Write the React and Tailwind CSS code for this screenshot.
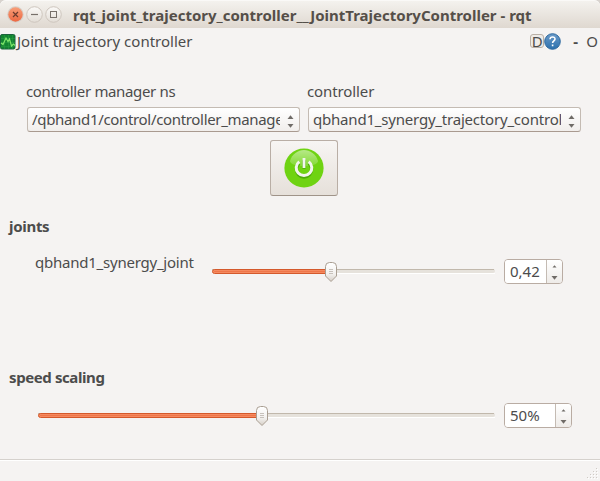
import React from "react";

const Arrow = ({ up, small }) => (
  <svg width="7" height="4" viewBox="0 0 7 4" className="block">
    <path
      d={up ? (small ? "M1.5 3.5 3.5 1.2 5.5 3.5Z" : "M.5 4 3.5.3 6.5 4Z") : "M.5 0 3.5 3.7 6.5 0Z"}
      fill="#6f6b67"
    />
  </svg>
);

const Combo = ({ children, spacing }) => (
  <div className="flex h-[25px] w-[273px] items-center rounded-[3px] border border-[#c4bbb3] border-b-[#a99a90] bg-gradient-to-b from-white to-[#f1eeec] pl-[4px]">
    <div className={`h-[22px] w-[248px] overflow-hidden whitespace-nowrap leading-[21px] ${spacing}`}>{children}</div>
    <div className="ml-[7px] mt-[4px] flex flex-col gap-[5px]">
      <Arrow up />
      <Arrow />
    </div>
  </div>
);

const Spin = ({ children, width, field }) => (
  <div className={`flex h-[25px] overflow-hidden rounded-[4px] border border-[#b9aca3] ${width}`}>
    <div className={`border-r border-[#c4bbb3] bg-white pl-[5px] leading-[23px] ${field}`}>{children}</div>
    <div className="flex flex-1 flex-col items-center gap-[8px] bg-gradient-to-b from-white to-[#eeebe8] pt-[4px]">
      <Arrow up small />
      <Arrow />
    </div>
  </div>
);

const Slider = ({ width, value, id }) => (
  <svg width={width} height="22" viewBox={`0 0 ${width} 22`} className="block shrink-0 overflow-visible">
    <defs>
      <linearGradient id={id} x1="0" x2="0" y1="0" y2="1">
        <stop offset="0" stopColor="#fff" />
        <stop offset=".6" stopColor="#f3f1ef" />
        <stop offset="1" stopColor="#d5cec6" />
      </linearGradient>
    </defs>
    <rect x="1" y="12" width={width - 1} height="1" fill="#fff" />
    <rect x="0" y="8" width={width} height="4" rx="2" fill="#e6e2dc" />
    <rect x="0" y="8" width={width - 1} height="1" fill="#c1b8ac" />
    <rect x=".5" y="8.5" width={value} height="4" rx="2" fill="#f58a60" stroke="#d4592c" />
    <rect x="2" y="10" width={value - 2} height="1" fill="#ef764a" />
    <path
      d={`M${value - 5.5} 5.5q0-4 4-4h3q4 0 4 4v9.5l-5.5 5.5-5.5-5.5Z`}
      fill={`url(#${id})`}
      stroke="#a99e92"
    />
    <path d={`M${value - 2} 8.5h4m-4 2h4m-4 2h4`} stroke="#c7c1bb" />
  </svg>
);

const GripDots = () => (
  <svg width="12" height="12" viewBox="0 0 12 12" className="block">
    {[[9, 0], [6, 3], [9, 3], [3, 6], [6, 6], [9, 6], [0, 9], [3, 9], [6, 9], [9, 9]].map(([x, y]) => (
      <g key={`${x}-${y}`}>
        <rect x={x + 1} y={y + 1} width="1" height="1" fill="#fff" />
        <rect x={x} y={y} width="1" height="1" fill="#cfcac5" />
      </g>
    ))}
  </svg>
);

const WindowButtons = () => (
  <svg width="58" height="20" viewBox="0 0 58 20" className="block shrink-0">
    <defs>
      <linearGradient id="close" x1="0" x2="0" y1="0" y2="1">
        <stop stopColor="#f89e78" />
        <stop offset="1" stopColor="#ec6842" />
      </linearGradient>
      <linearGradient id="plain" x1="0" x2="0" y1="0" y2="1">
        <stop stopColor="#fbfaf8" />
        <stop offset="1" stopColor="#e3ddd6" />
      </linearGradient>
    </defs>
    <circle cx="8.5" cy="9.5" r="8.3" fill="#d7d0c9" />
    <circle cx="8.5" cy="9.5" r="7.2" fill="url(#close)" />
    <path d="m6 7 5 5m0-5-5 5" stroke="#6c3b2d" strokeWidth="1.2" />
    <circle cx="27.5" cy="9.5" r="7.8" fill="url(#plain)" stroke="#cec6be" />
    <path d="M24 9.5h7" stroke="#77706a" strokeWidth="1.2" />
    <circle cx="46.5" cy="9.5" r="7.8" fill="url(#plain)" stroke="#cec6be" />
    <rect x="43.5" y="6.5" width="6" height="6" fill="none" stroke="#77706a" />
  </svg>
);

const PowerIcon = () => (
  <svg width="40" height="40" viewBox="0 0 40 40" className="block">
    <defs>
      <linearGradient id="gloss" x1="0" x2="0" y1="0" y2="1">
        <stop stopColor="#fff" stopOpacity=".5" />
        <stop offset="1" stopColor="#fff" stopOpacity=".15" />
      </linearGradient>
    </defs>
    <circle cx="20" cy="20" r="19.6" fill="#6fd312" />
    <path d="M6 13C8 6 14 2 20 2s12 4 14 11c0 3-6 5-14 5S6 16 6 13Z" fill="url(#gloss)" />
    <path d="M15.300 14.800a7.600 7.600 0 1 0 9.400 0M20 11.500v8.500" fill="none" stroke="#4eaa0a" strokeWidth="3.200" transform="translate(0 .8)" />
    <path d="M15.300 13.600a7.800 7.800 0 1 0 9.400 0" fill="none" stroke="#f2f5ee" strokeWidth="3" />
    <path d="M20 10v10" stroke="#f2f5ee" strokeWidth="2.800" />
  </svg>
);

export default function App() {
  return (
    <div className="h-[481px] w-[600px] overflow-hidden bg-[#d8d3ce] font-['Noto_Sans','Open_Sans',sans-serif] text-[15px] leading-[20px] text-[#4c4c4c]">
      <div className="flex h-full flex-col rounded-t-[6px] bg-[#f5f3f2]">
        <header className="flex h-[28px] shrink-0 items-center rounded-t-[6px] border-t border-[#faf9f7] bg-gradient-to-b from-[#f4f2ee] to-[#dfd8d0] pl-[7px]">
          <WindowButtons />
          <h1 className="ml-[8px] whitespace-nowrap font-bold text-[#554f49]">
            rqt_joint_trajectory_controller__JointTrajectoryController - rqt
          </h1>
        </header>

        <div className="flex h-[28px] shrink-0 items-start pr-[2px] pt-[3px]">
          <svg width="16" height="16" viewBox="0 0 16 16" className="mt-[3px] block shrink-0">
            <rect x=".5" y=".5" width="14.5" height="14.5" rx="1.5" fill="#138530" stroke="#1d633d" />
            <path d="M4.5 1v14M8.5 1v14M12.5 1v14M1 4.5h14M1 8.5h14M1 12.5h14" stroke="#32a34c" strokeWidth=".4" />
            <path d="m1 9 2 1.500 3-6.500 2 3.500 1.500-2.500 2 7 2-2 1.500 1.500" fill="none" stroke="#7ee66a" strokeWidth="1.2" />
          </svg>
          <span className="ml-px whitespace-nowrap">Joint trajectory controller</span>
          <div className="ml-auto flex items-start">
            <span className="mt-[3px] flex h-[14px] w-[14px] items-center justify-center rounded-[3px] border border-[#b9b0a6] bg-[#efebe7]">D</span>
            <svg width="17" height="17" viewBox="0 0 17 17" className="mt-[2px] block">
              <defs>
                <linearGradient id="help" x1="0" x2="0" y1="0" y2="1">
                  <stop stopColor="#6c9bc9" />
                  <stop offset="1" stopColor="#2b70ad" />
                </linearGradient>
              </defs>
              <circle cx="8.5" cy="8.5" r="7.8" fill="url(#help)" stroke="#2e699f" />
              <path d="M6 6.2q.2-2.2 2.6-2.2t2.4 2c0 1.8-2.4 1.8-2.4 4M8.6 11.5v1.7" fill="none" stroke="#fff" strokeWidth="1.6" />
            </svg>
            <span className="ml-[12px] w-[7px] font-bold">-</span>
            <span className="ml-[6px]">O</span>
          </div>
        </div>

        <main className="flex min-h-0 flex-1 flex-col">
          <section className="flex gap-[8px] pl-[27px] pt-[25px]">
            <div className="flex flex-col gap-[6px]">
              <label className="-ml-px tracking-[-0.35px]">controller manager ns</label>
              <Combo spacing="tracking-[-0.33px]">/qbhand1/control/controller_manager</Combo>
            </div>
            <div className="flex flex-col gap-[6px]">
              <label className="-ml-px tracking-[-0.1px]">controller</label>
              <Combo spacing="tracking-[-0.2px]">qbhand1_synergy_trajectory_controller</Combo>
            </div>
          </section>

          <button className="ml-[270px] mt-[8px] flex h-[56px] w-[68px] shrink-0 items-center justify-center rounded-[3px] border border-[#b9aea5] border-b-[#9f9389] bg-gradient-to-b from-[#f7f5f3] to-[#e6e0da]">
            <PowerIcon />
          </button>

          <section className="mt-[20px] h-[151px] shrink-0">
            <h2 className="ml-[9px] font-bold tracking-[-0.3px]">joints</h2>
            <div className="mt-[16px] flex items-start pl-[35px]">
              <label className="w-[177px] whitespace-nowrap tracking-[-0.23px]">qbhand1_synergy_joint</label>
              <div className="mt-[9px]">
                <Slider id="joint" width={283} value={119} />
              </div>
              <div className="ml-[9px] mt-[7px]">
                <Spin width="w-[59px]" field="w-[42px]">0,42</Spin>
              </div>
            </div>
          </section>

          <section className="shrink-0">
            <h2 className="ml-[9px] font-bold tracking-[-0.4px]">speed scaling</h2>
            <div className="mt-[16px] flex items-start pl-[38px]">
              <div className="mt-[2px]">
                <Slider id="speed" width={457} value={224} />
              </div>
              <div className="ml-[9px]">
                <Spin width="w-[68px]" field="w-[51px]">50%</Spin>
              </div>
            </div>
          </section>
        </main>

        <footer className="flex h-[22px] shrink-0 items-end justify-end border-t border-[#d5d1cd] pb-px pr-px shadow-[inset_0_1px_0_#fff]">
          <GripDots />
        </footer>
      </div>
    </div>
  );
}
